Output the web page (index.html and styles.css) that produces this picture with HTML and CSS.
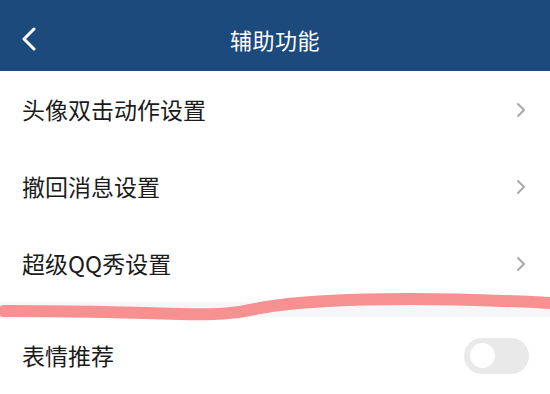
FILE: index.html
```html
<!DOCTYPE html>
<html lang="zh">
<head>
<meta charset="utf-8">
<link rel="stylesheet" href="styles.css">
</head>
<body>
<div class="page">
  <header class="topbar">
    <svg class="back" width="16" height="24" viewBox="0 0 16 24"><path d="M13 2 L3 12 L13 22" fill="none" stroke="#fff" stroke-width="3" stroke-linecap="round" stroke-linejoin="round"/></svg>
    <div class="title">辅助功能</div>
  </header>
  <section class="group">
    <div class="row"><span class="label">头像双击动作设置</span><svg class="chev" width="10" height="16" viewBox="0 0 10 16"><path d="M2 2 L8 8 L2 14" fill="none" stroke="#a9a9a9" stroke-width="2" stroke-linecap="round" stroke-linejoin="round"/></svg></div>
    <div class="row"><span class="label">撤回消息设置</span><svg class="chev" width="10" height="16" viewBox="0 0 10 16"><path d="M2 2 L8 8 L2 14" fill="none" stroke="#a9a9a9" stroke-width="2" stroke-linecap="round" stroke-linejoin="round"/></svg></div>
    <div class="row"><span class="label">超级QQ秀设置</span><svg class="chev" width="10" height="16" viewBox="0 0 10 16"><path d="M2 2 L8 8 L2 14" fill="none" stroke="#a9a9a9" stroke-width="2" stroke-linecap="round" stroke-linejoin="round"/></svg></div>
  </section>
  <div class="gap"></div>
  <section class="group">
    <div class="row"><span class="label">表情推荐</span><span class="toggle"><span class="knob"></span></span></div>
  </section>
  <svg class="scribble" width="550" height="40" viewBox="0 0 550 40"><path d="M4 21 C60 21 120 22 180 24 C215 25 235 24 260 18 C300 11 350 9 410 9 C460 9 510 11 552 13" fill="none" stroke="#f79191" stroke-width="12" stroke-linecap="round"/></svg>
</div>
</body>
</html>
```
FILE: styles.css
```css
html, body { margin: 0; padding: 0; }
body {
  width: 550px;
  height: 394px;
  overflow: hidden;
  background: #fff;
  font-family: "Noto Sans CJK SC", "Noto Sans", sans-serif;
}
.page { position: relative; width: 550px; height: 394px; overflow: hidden; }
.topbar {
  position: relative;
  height: 71px;
  background: #1d4a7c;
  display: flex;
  align-items: center;
  justify-content: center;
}
.back { position: absolute; left: 21px; top: 27px; }
.title {
  color: #fff;
  font-size: 22px;
  letter-spacing: 0.5px;
  margin-top: 6px;
}
.group { background: #fff; }
.row {
  height: 77px;
  display: flex;
  align-items: center;
  justify-content: space-between;
  padding: 0 22px 0 22px;
}
.label {
  font-size: 23px;
  color: #1b1b1b;
  line-height: 1;
}
.chev { margin-right: 2px; }
.gap { height: 15px; background: #f5f6f8; }
.toggle {
  width: 65px;
  height: 36px;
  border-radius: 18px;
  background: #e9e9e9;
  display: flex;
  align-items: center;
  padding-left: 6px;
  box-sizing: border-box;
  margin-right: -1px;
}
.knob {
  width: 25px;
  height: 25px;
  border-radius: 50%;
  background: #fff;
}
.scribble { position: absolute; left: 0; top: 290px; }
```
